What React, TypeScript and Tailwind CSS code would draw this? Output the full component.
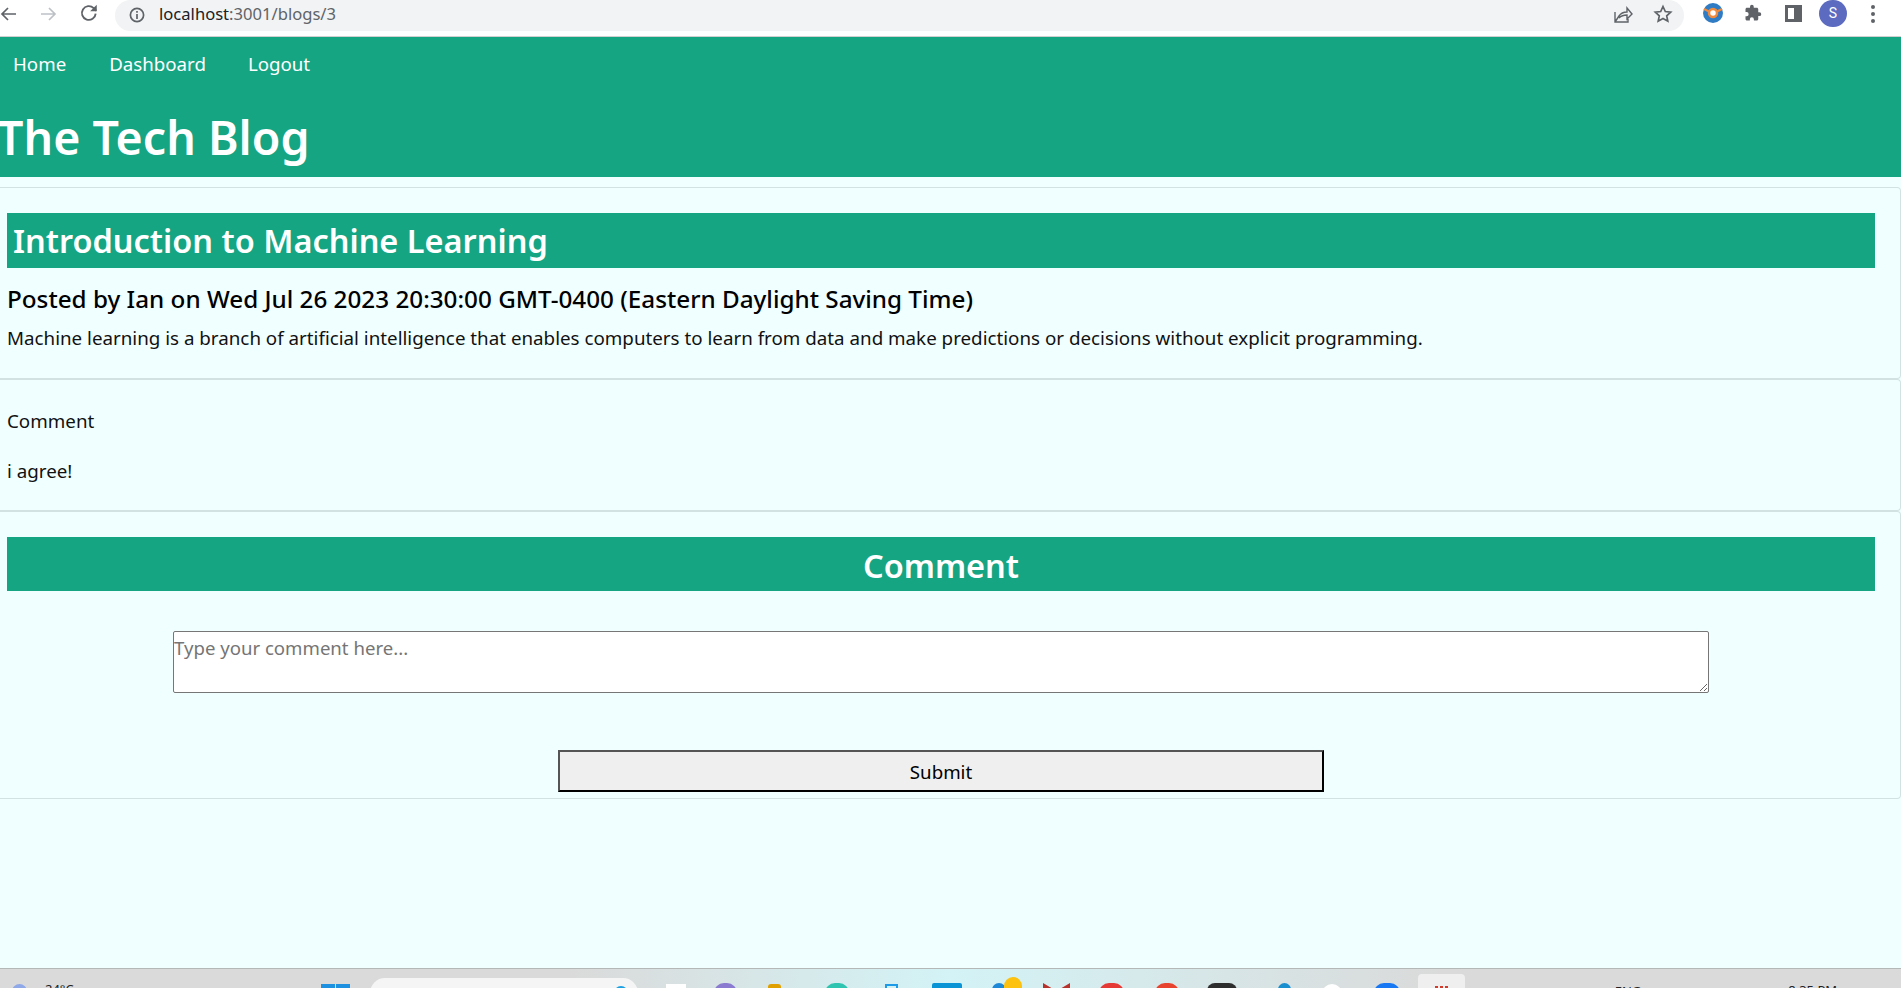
import React from 'react'

function BrowserBar() {
  return (
    <div className="h-[37px] bg-white border-b border-[#d0d0d0] flex items-start text-[#5f6368] overflow-hidden">
      <svg width="18" height="18" viewBox="0 0 18 18" className="mt-[5px] ml-[-1px] shrink-0" fill="none" stroke="#5f6368" strokeWidth="1.7">
        <path d="M17 9H3M9 3L3 9l6 6" />
      </svg>
      <svg width="18" height="18" viewBox="0 0 18 18" className="mt-[5px] ml-[22px] shrink-0" fill="none" stroke="#bdc1c6" strokeWidth="1.7">
        <path d="M2 9h14M10 3l6 6-6 6" />
      </svg>
      <svg width="20" height="20" viewBox="0 0 18 18" className="mt-[3px] ml-[22px] shrink-0" fill="none" stroke="#5f6368" strokeWidth="1.7">
        <path d="M15 9.500A6.200 6.200 0 1 1 13.200 4.600L15.500 7" />
        <path d="M16 1.500V7.500H10" fill="#5f6368" stroke="none" />
      </svg>
      <div className="ml-[16px] w-[1569px] h-[31px] bg-[#f1f3f4] rounded-[16px] flex items-center shrink-0">
        <svg width="16" height="16" viewBox="0 0 16 16" className="ml-[14px] mb-[2px]" fill="none" stroke="#5f6368" strokeWidth="1.7">
          <circle cx="8" cy="8" r="6.6" />
          <path d="M8 7v5M8 4v1.800" />
        </svg>
        <span className="ml-[14px] mb-[3px] text-[16.6px] text-[#5f6368] font-['Noto_Sans',sans-serif]">
          <span className="text-[#202124]">localhost</span>:3001/blogs/3
        </span>
        <svg width="20" height="20" viewBox="0 0 20 20" className="ml-auto mb-[3px]" fill="none" stroke="#5f6368" strokeWidth="1.4">
          <path d="M2 8v10h13v-3M2 18l4-6c2-3 5-4 8-4V4l5 6-5 5v-4c-3 0-6 1-8 3" />
        </svg>
        <svg width="20" height="20" viewBox="0 0 20 20" className="ml-[20px] mr-[11px] mb-[3px]" fill="none" stroke="#5f6368" strokeWidth="1.7">
          <path d="M10 2.500l2.300 5 5.400.6-4 3.700 1.100 5.400-4.800-2.700-4.800 2.700 1.100-5.400-4-3.700 5.400-.6z" />
        </svg>
      </div>
      <svg width="20" height="20" viewBox="0 0 20 20" className="mt-[3px] ml-[19px] shrink-0">
        <circle cx="10" cy="10" r="10" fill="#2f7cc4" />
        <path d="M1 6l6 3M19 6l-6 3" stroke="#f08a3c" strokeWidth="2" />
        <circle cx="10" cy="10" r="4" fill="white" stroke="#f08a3c" strokeWidth="2.500" />
      </svg>
      <svg width="18" height="18" viewBox="0 0 24 24" className="mt-[4px] ml-[21px] shrink-0" fill="#5f6368">
        <path d="M20.500 11H19V7c0-1.100-.9-2-2-2h-4V3.500a2.500 2.500 0 0 0-5 0V5H4c-1.100 0-2 .9-2 2v3.800h1.500a2.700 2.700 0 0 1 0 5.400H2V20c0 1.100.9 2 2 2h3.800v-1.500a2.700 2.700 0 0 1 5.400 0V22H17c1.100 0 2-.9 2-2v-4h1.500a2.500 2.500 0 0 0 0-5z" />
      </svg>
      <div className="mt-[5px] ml-[23px] w-[17px] h-[17px] border-[3px] border-[#5f6368] bg-white flex justify-end shrink-0">
        <div className="w-[5px] h-full bg-[#5f6368]"></div>
      </div>
      <div className="ml-[17px] w-[28px] h-[27px] rounded-full bg-[#5c6bc0] text-white text-[14px] flex items-center justify-center font-['Roboto',sans-serif] shrink-0">
        S
      </div>
      <div className="mt-[5px] ml-[24px] flex flex-col gap-[3px] shrink-0">
        <div className="w-[4px] h-[4px] rounded-full bg-[#5f6368]"></div>
        <div className="w-[4px] h-[4px] rounded-full bg-[#5f6368]"></div>
        <div className="w-[4px] h-[4px] rounded-full bg-[#5f6368]"></div>
      </div>
    </div>
  )
}

function Header() {
  return (
    <header className="h-[140px] bg-[#16a583] text-white overflow-hidden">
      <nav className="flex text-[18.7px] leading-[28px] pt-[13px] h-[72px]">
        <a className="ml-[13px]">Home</a>
        <a className="ml-[43px]">Dashboard</a>
        <a className="ml-[42px]">Logout</a>
      </nav>
      <h1 className="text-[46.5px] leading-[60px] font-semibold ml-[-3px] mt-[-2px]">The Tech Blog</h1>
    </header>
  )
}

function Taskbar() {
  return (
    <div className="h-[20px] border-t border-[#b4b9b8] bg-gradient-to-r from-[#dadada] from-[30%] via-[#d3f3f6] via-[50%] to-[#dadada] to-[76%] overflow-hidden flex items-start">
      <div className="ml-[12px] mt-[15px] w-[15px] h-[15px] rounded-full bg-[#8fa8e8] shrink-0"></div>
      <span className="ml-[18px] mt-[12px] text-[13px] leading-[16px] text-[#222] shrink-0">24°C</span>
      <div className="ml-[247px] mt-[15px] w-[29px] grid grid-cols-2 gap-[1px] shrink-0">
        <div className="h-[14px] bg-[#1e90e0]"></div>
        <div className="h-[14px] bg-[#1e90e0]"></div>
      </div>
      <div className="ml-[20px] mt-[9px] w-[268px] h-[30px] rounded-[15px] bg-[#f5f5f5] flex justify-end shrink-0">
        <div className="mt-[8px] mr-[10px] w-[14px] h-[14px] rounded-full bg-[#1ba1e2]"></div>
      </div>
      <div className="ml-[28px] mt-[15px] w-[20px] h-[20px] bg-white shrink-0"></div>
      <div className="ml-[28px] mt-[14px] w-[23px] h-[20px] rounded-full bg-[#8a7ad0] shrink-0"></div>
      <div className="ml-[31px] mt-[15px] w-[13px] h-[20px] rounded-t-[3px] bg-[#e0a000] shrink-0"></div>
      <div className="ml-[44px] mt-[14px] w-[24px] h-[20px] rounded-full bg-[#2fc4b0] shrink-0"></div>
      <div className="ml-[36px] mt-[15px] w-[13px] h-[14px] border-2 border-[#1e9be8] shrink-0"></div>
      <div className="ml-[34px] mt-[14px] w-[30px] h-[20px] rounded-t-[2px] bg-[#0a94d6] shrink-0"></div>
      <div className="ml-[30px] mt-[14px] w-[14px] h-[20px] rounded-full bg-[#1e88d8] shrink-0"></div>
      <div className="ml-[-2px] mt-[8px] w-[18px] h-[20px] rounded-full bg-[#fcc20f] shrink-0"></div>
      <svg width="27" height="10" viewBox="0 0 27 10" className="ml-[21px] mt-[14px] shrink-0">
        <path d="M0 0l13.500 8L27 0v10H0z" fill="#b8322c" />
      </svg>
      <div className="ml-[29px] mt-[14px] w-[25px] h-[20px] rounded-full bg-[#e53935] shrink-0"></div>
      <div className="ml-[31px] mt-[14px] w-[24px] h-[20px] rounded-full bg-[#e8432f] shrink-0"></div>
      <div className="ml-[28px] mt-[14px] w-[30px] h-[20px] rounded-t-[8px] bg-[#2d2d2d] shrink-0"></div>
      <div className="ml-[41px] mt-[14px] w-[13px] h-[20px] rounded-t-full bg-[#1a8fd0] shrink-0"></div>
      <div className="ml-[31px] mt-[15px] w-[20px] h-[20px] rounded-full bg-white shrink-0"></div>
      <div className="ml-[32px] mt-[14px] w-[26px] h-[20px] rounded-full bg-[#1877f2] shrink-0"></div>
      <div className="ml-[18px] mt-[5px] w-[47px] h-[20px] rounded-[4px] bg-[#efefef] flex justify-center gap-[2px] shrink-0">
        <div className="mt-[12px] w-[3px] h-[6px] bg-[#d23a2a]"></div>
        <div className="mt-[12px] w-[3px] h-[6px] bg-[#d23a2a]"></div>
        <div className="mt-[12px] w-[3px] h-[6px] bg-[#d23a2a]"></div>
      </div>
      <span className="ml-[150px] mt-[14px] text-[13px] leading-[16px] text-[#222] shrink-0">ENG</span>
      <span className="ml-[147px] mt-[13px] text-[13px] leading-[16px] text-[#222] shrink-0">8:35 PM</span>
    </div>
  )
}

export default function App() {
  return (
    <div className="h-[988px] w-[1901px] overflow-hidden flex flex-col bg-[#f0ffff] text-[#111] font-['Noto_Sans',sans-serif]">
      <BrowserBar />
      <Header />
      <main className="flex-1 pt-[10px]">
        <section className="h-[192px] border border-l-0 border-[#d2e2e2] rounded-r-[4px] pt-[25px] pl-[7px]">
          <h2 className="w-[1868px] h-[55px] bg-[#16a583] text-white text-[32.5px] leading-[56px] font-semibold pl-[6px]">
            Introduction to Machine Learning
          </h2>
          <h3 className="mt-[13px] text-[24.25px] leading-[36px] font-medium text-black">
            Posted by Ian on Wed Jul 26 2023 20:30:00 GMT-0400 (Eastern Daylight Saving Time)
          </h3>
          <p className="mt-[7px] text-[18.77px] leading-[28px]">
            Machine learning is a branch of artificial intelligence that enables computers to learn from data and make predictions or decisions without explicit programming.
          </p>
        </section>
        <section className="h-[132px] border border-l-0 border-[#d2e2e2] rounded-r-[4px] pt-[27px] pl-[7px] text-[18.77px] leading-[28px]">
          <p>Comment</p>
          <p className="mt-[22px]">i agree!</p>
        </section>
        <section className="h-[288px] border border-l-0 border-[#d2e2e2] rounded-r-[4px] pt-[25px] pl-[7px] flex flex-col">
          <h2 className="w-[1868px] h-[54px] bg-[#16a583] text-white text-[32.5px] leading-[58px] font-semibold text-center">
            Comment
          </h2>
          <textarea
            placeholder="Type your comment here..."
            className="block w-[1536px] h-[62px] mt-[40px] ml-[166px] bg-white border border-[#767676] rounded-[2px] text-[18.6px] leading-[32px] placeholder:text-[#757575] resize-y"
          ></textarea>
          <button className="block w-[766px] h-[42px] mt-[57px] ml-[551px] pt-[2px] bg-[#efefef] border-[2px] border-t-[#555] border-l-[#555] border-r-black border-b-black text-[18.7px] text-black">
            Submit
          </button>
        </section>
      </main>
      <Taskbar />
    </div>
  )
}
